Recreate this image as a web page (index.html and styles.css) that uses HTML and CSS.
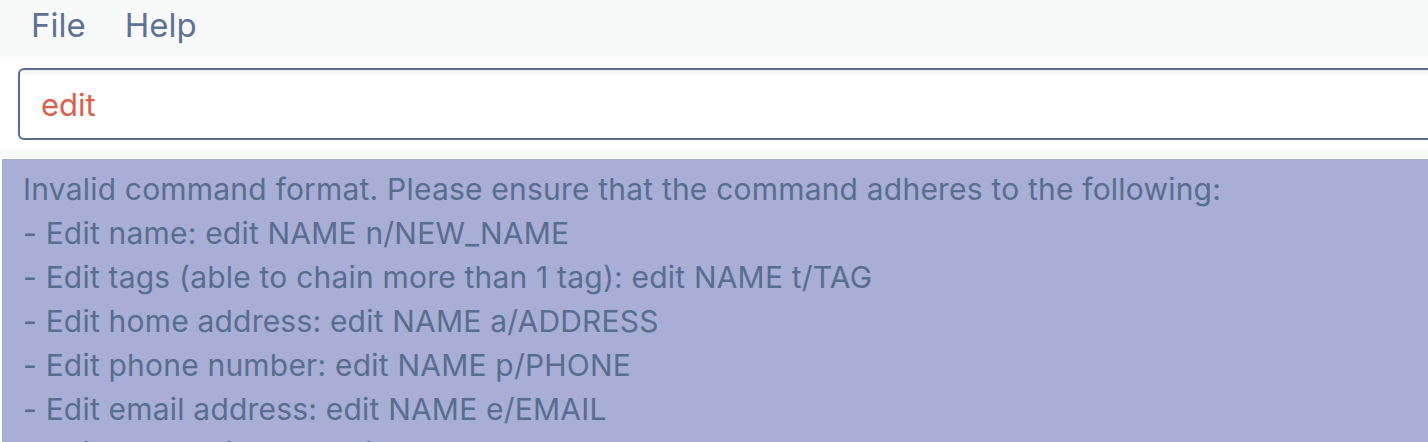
FILE: index.html
```html
<!DOCTYPE html>
<html>
<head>
<meta charset="utf-8">
<link rel="stylesheet" href="styles.css">
</head>
<body>
<div class="app">
  <nav class="menubar">
    <span class="menu-item">File</span>
    <span class="menu-item">Help</span>
  </nav>
  <div class="command-area">
    <div class="command-box"><span class="command-text">edit</span></div>
  </div>
  <div class="result">
    <div class="line">Invalid command format. Please ensure that the command adheres to the following:</div>
    <div class="line">- Edit name: edit NAME n/NEW_NAME</div>
    <div class="line">- Edit tags (able to chain more than 1 tag): edit NAME t/TAG</div>
    <div class="line">- Edit home address: edit NAME a/ADDRESS</div>
    <div class="line">- Edit phone number: edit NAME p/PHONE</div>
    <div class="line">- Edit email address: edit NAME e/EMAIL</div>
    <div class="line">- Edit rank: edit NAME r/RANK</div>
  </div>
</div>
</body>
</html>
```

FILE: styles.css
```css
* { box-sizing: border-box; }
html, body {
  margin: 0;
  padding: 0;
  height: 100%;
  overflow: hidden;
  background: #ffffff;
  font-family: Inter, "Noto Sans", sans-serif;
}
.app {
  display: flex;
  flex-direction: column;
}
.menubar {
  height: 57px;
  background: #f8fafa;
  display: flex;
  align-items: flex-start;
  padding: 7px 0 0 31px;
  gap: 39px;
  color: #5f7296;
  font-size: 33px;
}
.menu-item {
  line-height: 36px;
}
.command-area {
  padding: 11px 0 19px 18px;
  background: linear-gradient(#ffffff 0, #ffffff 92px, #f9fafa 92px);
}
.command-box {
  height: 72px;
  border: 2px solid #5b6d8f;
  border-right: none;
  border-radius: 6px 0 0 6px;
  background: #ffffff;
  box-shadow: inset 0 6px 6px -4px rgba(0,0,0,0.08);
  display: flex;
  align-items: center;
  padding-left: 21px;
}
.command-text {
  color: #d8604c;
  font-size: 31px;
}
.result {
  margin-left: 2px;
  background: #a8aed6;
  padding: 8px 0 0 21px;
  color: #5a6d8e;
  font-size: 30px;
  letter-spacing: 0.2px;
  line-height: 44px;
  height: 300px;
}
.line {
  white-space: nowrap;
}
```
